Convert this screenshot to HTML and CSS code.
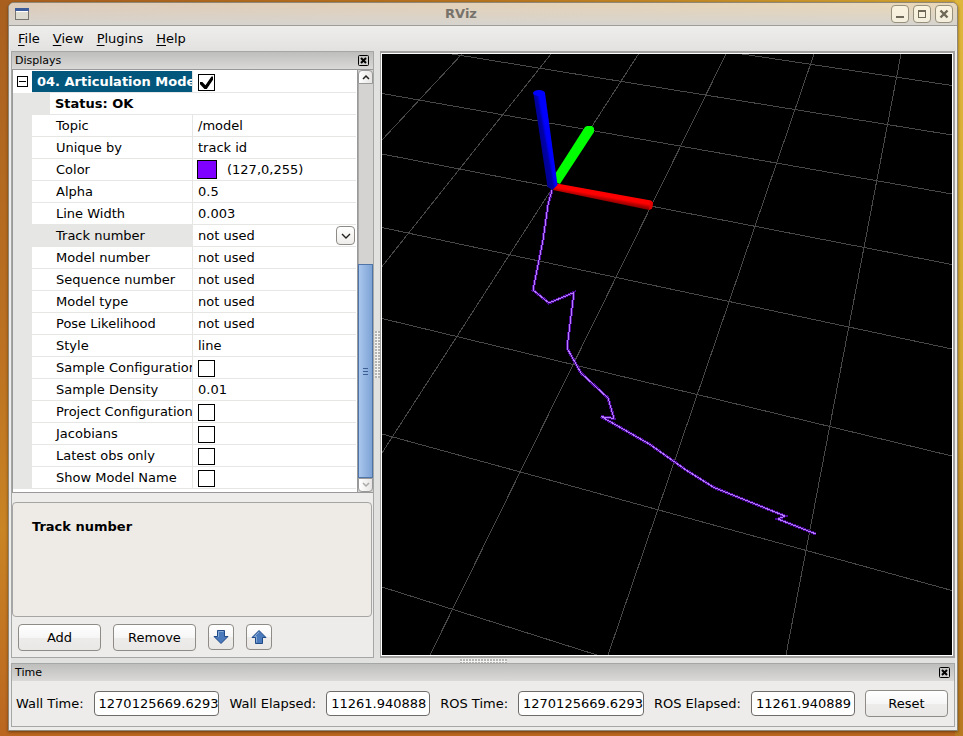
FILE: index.html
```html
<!DOCTYPE html>
<html lang="en">
<head>
<meta charset="utf-8">
<title>RViz</title>
<link rel="stylesheet" href="styles.css">
</head>
<body>
<div class="window">
  <header class="titlebar">
    <svg class="app-icon" viewBox="0 0 14 12" width="14" height="12" aria-hidden="true">
      <rect x="0.5" y="0.5" width="13" height="11" fill="#dedbd0" stroke="#77756f"/>
      <rect x="0" y="0" width="14" height="3" fill="#3e5c9a"/>
      <rect x="1" y="3" width="12" height="1" fill="#fff"/>
    </svg>
    <h1 class="title">RViz</h1>
    <div class="window-buttons">
      <button type="button" class="window-button" aria-label="Minimize"><svg viewBox="0 0 10 10" width="10" height="10"><rect x="1" y="7" width="8" height="2" fill="#6d6858"/></svg></button>
      <button type="button" class="window-button" aria-label="Maximize"><svg viewBox="0 0 10 10" width="10" height="10"><path d="M1 1h8v8H1z M2 3v5h6V3z" fill="#6d6858" fill-rule="evenodd"/></svg></button>
      <button type="button" class="window-button" aria-label="Close"><svg viewBox="0 0 10 10" width="10" height="10"><path d="M1.500 1.500l7 7M8.500 1.500l-7 7" stroke="#6d6858" stroke-width="2.400"/></svg></button>
    </div>
  </header>

  <nav class="menubar">
    <button type="button" class="menu"><u>F</u>ile</button>
    <button type="button" class="menu"><u>V</u>iew</button>
    <button type="button" class="menu"><u>P</u>lugins</button>
    <button type="button" class="menu"><u>H</u>elp</button>
  </nav>

  <main class="workspace">
    <section class="panel displays">
      <div class="caption">
        <h2 class="caption-text">Displays</h2>
        <button type="button" class="caption-close" aria-label="Close displays"><svg viewBox="0 0 11 11" width="11" height="11"><rect x="0.5" y="0.5" width="10" height="10" rx="1" fill="none" stroke="#000"/><path d="M3 3l5 5M8 3l-5 5" stroke="#000" stroke-width="2"/></svg></button>
      </div>

      <div class="tree">
        <div class="tree-view">
          <table class="props">
            <colgroup><col class="col-toggle"><col class="col-name"><col></colgroup>
            <tbody>
              <tr class="group">
                <td class="toggle-cell"><button type="button" class="toggle" aria-label="Collapse"></button></td>
                <th scope="row"><label for="enabled">04. Articulation Models</label></th>
                <td><input type="checkbox" id="enabled" checked></td>
              </tr>
              <tr class="status"><td></td><th scope="row" colspan="2">Status: OK</th></tr>
              <tr><td></td><th scope="row">Topic</th><td>/model</td></tr>
              <tr><td></td><th scope="row">Unique by</th><td>track id</td></tr>
              <tr><td></td><th scope="row">Color</th><td><div class="color-value"><span class="swatch"></span>(127,0,255)</div></td></tr>
              <tr><td></td><th scope="row">Alpha</th><td>0.5</td></tr>
              <tr><td></td><th scope="row">Line Width</th><td>0.003</td></tr>
              <tr class="selected">
                <td></td>
                <th scope="row"><label for="track">Track number</label></th>
                <td><div class="choice">
                  <select id="track"><option>not used</option></select>
                  <span class="choice-arrow"><svg viewBox="0 0 10 6" width="10" height="6"><path d="M1 1l4 4 4-4" fill="none" stroke="#222" stroke-width="1.4"/></svg></span>
                </div></td>
              </tr>
              <tr><td></td><th scope="row">Model number</th><td>not used</td></tr>
              <tr><td></td><th scope="row">Sequence number</th><td>not used</td></tr>
              <tr><td></td><th scope="row">Model type</th><td>not used</td></tr>
              <tr><td></td><th scope="row">Pose Likelihood</th><td>not used</td></tr>
              <tr><td></td><th scope="row">Style</th><td>line</td></tr>
              <tr><td></td><th scope="row"><label for="sample-conf">Sample Configurations</label></th><td><input type="checkbox" id="sample-conf"></td></tr>
              <tr><td></td><th scope="row">Sample Density</th><td>0.01</td></tr>
              <tr><td></td><th scope="row"><label for="project-conf">Project Configurations</label></th><td><input type="checkbox" id="project-conf"></td></tr>
              <tr><td></td><th scope="row"><label for="jacobians">Jacobians</label></th><td><input type="checkbox" id="jacobians"></td></tr>
              <tr><td></td><th scope="row"><label for="latest">Latest obs only</label></th><td><input type="checkbox" id="latest"></td></tr>
              <tr><td></td><th scope="row"><label for="show-name">Show Model Name</label></th><td><input type="checkbox" id="show-name"></td></tr>
            </tbody>
          </table>
        </div>
        <div class="scrollbar">
          <button type="button" class="scroll-step up" aria-label="Scroll up"><svg viewBox="0 0 8 6" width="8" height="6"><path d="M1 5l3-3 3 3" fill="none" stroke="#222" stroke-width="1.5"/></svg></button>
          <div class="scroll-track"></div>
          <div class="scroll-thumb"><span></span><span></span><span></span></div>
          <button type="button" class="scroll-step down" aria-label="Scroll down"><svg viewBox="0 0 8 6" width="8" height="6"><path d="M1 1l3 3 3-3" fill="none" stroke="#aaa" stroke-width="1.5"/></svg></button>
        </div>
      </div>

      <div class="help-box"><h3 class="help-title">Track number</h3></div>

      <div class="actions">
        <button type="button" class="button">Add</button>
        <button type="button" class="button">Remove</button>
        <button type="button" class="button icon" aria-label="Move down"><svg viewBox="0 0 16 16" width="16" height="16"><path d="M4.5 1.5h7v6h3.5L8 14.5 1 7.5h3.5z" fill="#4a7abb" stroke="#204a87"/><path d="M5.5 8V2.5h5" fill="none" stroke="#86a9d6"/></svg></button>
        <button type="button" class="button icon" aria-label="Move up"><svg viewBox="0 0 16 16" width="16" height="16"><path d="M4.5 14.5h7v-6h3.500L8 1.500 1 8.500h3.500z" fill="#4a7abb" stroke="#204a87"/><path d="M5.500 13.500V7.500H3.500L8 3" fill="none" stroke="#86a9d6"/></svg></button>
      </div>
    </section>

    <div class="sash vertical"><div class="grip"></div></div>

    <section class="view">
      <svg class="scene" viewBox="382 54 570 601" preserveAspectRatio="xMidYMid slice" role="img" aria-label="3D view">
        <defs>
          <linearGradient id="blue-side" gradientUnits="userSpaceOnUse" x1="541" y1="141" x2="552" y2="139">
            <stop offset="0" stop-color="#000096"/><stop offset="0.35" stop-color="#0000a8"/><stop offset="0.5" stop-color="#0000e6"/><stop offset="0.65" stop-color="#0000ff"/>
          </linearGradient>
          <linearGradient id="red-side" gradientUnits="userSpaceOnUse" x1="604" y1="191" x2="602" y2="202">
            <stop offset="0" stop-color="#ff0000"/><stop offset="0.45" stop-color="#ff0000"/><stop offset="0.65" stop-color="#c40000"/><stop offset="1" stop-color="#780000"/>
          </linearGradient>
        </defs>
        <g class="grid-lines">
          <path d="M742 54L952 85.500M452 54L952 135M382 93.500L952 194M382 154L952 264.500M382 227.500L952 349M382 318.500L952 456M382 434L952 590.500M382 587L597 655"/>
          <path d="M462 54L382 140M551 54L382 266.500M638.500 54L382 453M726 54L430 655M814 54L608 655M901 54L786 655"/>
        </g>
        <g class="trail">
          <path class="trail-glow" d="M552 190L548 205L543 240L533 290L549 303L574 292.500L567 348L581 373L608 398L614 418.500L601 416.500L650 444.500L686 470L714 487.500L785 516L778 519L816 534"/>
          <path class="trail-core" d="M552 190L548 205L543 240L533 290L549 303L574 292.500L567 348L581 373L608 398L614 418.500L601 416.500L650 444.500L686 470L714 487.500L785 516L778 519L816 534"/>
        </g>
        <path d="M585 127l2-1h5l2 2v4l-34 52-7-3 2-7z" fill="#00ff00"/>
        <path d="M553 188l4-4.500 94 17 2 2-1 6-3 1.500-96-20z" fill="url(#red-side)"/>
        <path d="M650 201l3 1.500-1 6-3 1.500z" fill="#e00000"/>
        <path d="M533.500 94l11.500-1 12.500 92-5 5-5-3z" fill="url(#blue-side)"/>
        <ellipse cx="539" cy="93" rx="6" ry="3" fill="#0000ff"/>
      </svg>
    </section>
  </main>

  <div class="sash horizontal"><div class="grip"></div></div>

  <section class="panel time">
    <div class="caption">
      <h2 class="caption-text">Time</h2>
      <button type="button" class="caption-close" aria-label="Close time"><svg viewBox="0 0 11 11" width="11" height="11"><rect x="0.5" y="0.5" width="10" height="10" rx="1" fill="none" stroke="#000"/><path d="M3 3l5 5M8 3l-5 5" stroke="#000" stroke-width="2"/></svg></button>
    </div>
    <form class="time-row">
      <label for="wall-time">Wall Time:</label><input type="text" class="field wide" id="wall-time" value="1270125669.62935">
      <label for="wall-elapsed">Wall Elapsed:</label><input type="text" class="field" id="wall-elapsed" value="11261.940888">
      <label for="ros-time">ROS Time:</label><input type="text" class="field wide" id="ros-time" value="1270125669.6293">
      <label for="ros-elapsed">ROS Elapsed:</label><input type="text" class="field" id="ros-elapsed" value="11261.940889">
      <button type="button" class="button">Reset</button>
    </form>
  </section>
</div>
</body>
</html>
```
FILE: styles.css
```css
* { box-sizing: border-box; }

body {
  margin: 0;
  min-height: 100vh;
  display: flex;
  padding: 2px 5px 5px 8px;
  font: 13px/16px "DejaVu Sans", sans-serif;
  color: #000;
  background:
    linear-gradient(to bottom, #dfb63c, #d4a832 50%, #bf7f24 85%, #b87a20) right / 8px 100% no-repeat,
    linear-gradient(to right, #a9601f, #b9761f 50%, #d4a832) top / 100% 8px no-repeat,
    linear-gradient(to bottom, #a9601f, #bd7322 50%, #c98424 72%, #ba6620);
}

button, input, select { font: inherit; color: inherit; margin: 0; }
button { padding: 0; }
h1, h2, h3 { margin: 0; font: inherit; }
svg { display: block; }

.window {
  flex: 1;
  min-width: 0;
  display: flex;
  flex-direction: column;
  border: 1px solid #8f8778;
  border-radius: 6px 6px 0 0;
  background: #edecea;
  box-shadow: 0 1px 3px rgba(60, 30, 0, 0.6);
  padding: 0 2px 3px;
}

.titlebar {
  display: flex;
  align-items: center;
  height: 23px;
  margin: 0 -2px;
  padding: 0 4px 0 6px;
  border-bottom: 1px solid #a09d97;
  border-radius: 5px 5px 0 0;
  background: linear-gradient(to bottom, rgba(216, 214, 208, 0), #d6d4cf), linear-gradient(to right, #dfcbb8, #ead8b8);
}
.title { flex: 1; text-align: center; font-weight: bold; color: #77726a; padding-left: 2px; }
.window-buttons { display: flex; gap: 4px; }
.window-button {
  width: 18px;
  height: 18px;
  display: grid;
  place-items: center;
  border: 1px solid #97907c;
  border-radius: 4px;
  background: linear-gradient(#faf3de, #f3eddd);
}

.menubar {
  display: flex;
  gap: 13px;
  height: 25px;
  padding: 0 8px;
  margin: 0 -1px;
  background: linear-gradient(#eeeeed, #e2e1e0);
}
.menu { border: 0; background: none; }
.menu u { text-underline-offset: 2px; }

.workspace { flex: 1; display: flex; min-height: 0; background: #e1e1df; }

.panel { border: 1px solid #a5a7a6; background: #edecea; }
.displays { width: 363px; display: flex; flex-direction: column; }

.caption {
  display: flex;
  align-items: center;
  justify-content: space-between;
  height: 17px;
  padding: 0 4px 0 3px;
  background: linear-gradient(#bebebc, #dad9d8);
}
.caption-text { font-size: 11px; line-height: 14px; }
.caption-close { border: 0; background: none; }

.tree { display: flex; border: solid #999; border-width: 1px 0; }
.tree-view { flex: 1; min-width: 0; padding: 1px 1px 3px 0; background: #fff; border-right: 1px solid #999; border-left: 1px solid #999; }

.props { width: 100%; border-collapse: separate; border-spacing: 0; table-layout: fixed; }
.col-toggle { width: 19px; }
.col-name { width: 161px; }
.props td, .props th {
  height: 22px;
  padding: 0 0 0 5px;
  border-bottom: 1px solid #e6e6e4;
  font-weight: normal;
  text-align: left;
  white-space: nowrap;
  overflow: hidden;
}
.props th { padding-left: 24px; border-right: 1px solid #e6e6e4; }
.props td:first-child { background: #e6e6e4; padding: 0; }
.props .group td:first-child { background: #fff; border-bottom-color: #fff; }
.props .group th { background: #03577c; color: #fff; font-weight: bold; padding-left: 5px; }
.props .status th { font-weight: bold; border-left: 18px solid #e6e6e4; border-right: 0; padding-left: 5px; }
.props .selected th { background: #e6e6e4; }

.toggle {
  display: grid;
  place-items: center;
  width: 11px;
  height: 11px;
  margin: 0 0 0 4px;
  border: 1px solid #000;
  background: #fff;
}
.toggle::before { content: ""; width: 7px; height: 1px; background: #000; }

input[type="checkbox"] {
  appearance: none;
  display: grid;
  width: 17px;
  height: 17px;
  margin-top: 2px;
  border: 1px solid #000;
  background: #fff;
}
input[type="checkbox"]:checked::before {
  content: "";
  margin: 1px;
  background: #000;
  clip-path: polygon(0 46%, 18% 46%, 42% 72%, 88% 4%, 100% 4%, 100% 28%, 52% 100%, 34% 100%, 0 64%);
}

.color-value { display: flex; align-items: center; gap: 10px; margin-left: -1px; }
.swatch { width: 20px; height: 19px; border: 1px solid #000; background: #7f00ff; }

.choice { display: grid; align-items: center; }
.choice > * { grid-area: 1 / 1; }
.choice select { appearance: none; border: 0; padding: 0; background: none; width: 100%; height: 20px; }
.choice-arrow {
  justify-self: end;
  display: grid;
  place-items: center;
  width: 19px;
  height: 19px;
  margin-right: 1px;
  border: 1px solid #8f8b86;
  border-radius: 4px;
  background: linear-gradient(#fff, #eeedeb);
  pointer-events: none;
}

.scrollbar { width: 15px; display: flex; flex-direction: column; background: #d4d3d1; }
.scroll-track { flex: 181; border-left: 1px solid #aaa; }
.scroll-thumb {
  flex: 213;
  display: flex;
  flex-direction: column;
  align-items: center;
  justify-content: center;
  gap: 2px;
  border: 1px solid #4f74a8;
  background: linear-gradient(to right, #a9c6ed, #7da3d5);
}
.scroll-thumb span { width: 5px; height: 1px; background: #3b5f92; }
.scroll-step {
  height: 14px;
  display: grid;
  place-items: center;
  border: 1px solid #999;
  background: linear-gradient(to right, #fff, #e6e5e3);
}
.scroll-step.up { border-radius: 4px 4px 0 0; }
.scroll-step.down { border-radius: 0 0 4px 4px; }

.help-box {
  flex: 1;
  margin: 9px 1px 0 0;
  padding: 16px 19px;
  border: 1px solid #a5a5a5;
  border-radius: 4px;
  background: #eeebe7;
}
.help-title { font-weight: bold; }

.actions { display: flex; gap: 12px; padding: 7px 6px 6px; }
.button {
  width: 83px;
  height: 27px;
  border: 1px solid #8f8b86;
  border-radius: 4px;
  background: linear-gradient(#fff, #f7f6f6 50%, #edecea 51%, #e9e8e6);
}
.button.icon { width: 26px; height: 26px; display: grid; place-items: center; }

.sash { background: #e1e1df; display: flex; align-items: center; justify-content: center; }
.sash.vertical { width: 6px; }
.sash.horizontal { height: 5px; }
.grip {
  background: radial-gradient(circle at 1px 1px, #b4b4b2 0, #b4b4b2 1px, #f2f2f1 1px) 0 0 / 3px 3px;
}
.vertical .grip { width: 5px; height: 47px; }
.horizontal .grip { width: 47px; height: 4px; }

.view {
  flex: 1;
  min-width: 0;
  display: grid;
  border: solid #a3a19f;
  border-width: 2px 2px 2px 1px;
  background: #fff;
  padding: 1px;
}
.scene { width: 100%; height: 100%; min-height: 0; background: #000; }
.grid-lines path { fill: none; stroke: #484848; stroke-width: 1; shape-rendering: crispEdges; }
.trail path { fill: none; stroke-linejoin: miter; shape-rendering: crispEdges; }
.trail-glow { stroke: #4a0a96; stroke-width: 3; }
.trail-core { stroke: #b87cff; stroke-width: 1; }

.time-row { display: flex; align-items: center; gap: 10px; height: 45px; padding: 0 6px 0 4px; }
.time-row label { white-space: nowrap; }
.field {
  flex: 103 1 0;
  min-width: 0;
  height: 25px;
  padding: 0 0 0 4px;
  border: 1px solid #6f6b68;
  border-radius: 4px;
  background: #fff;
}
.field.wide { flex-grow: 126; }
```
